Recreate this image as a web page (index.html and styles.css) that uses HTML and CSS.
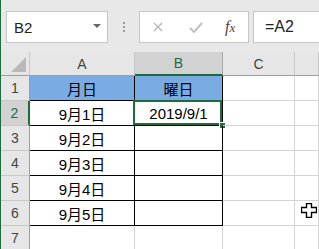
FILE: index.html
```html
<!DOCTYPE html>
<html lang="ja">
<head>
    <meta charset="UTF-8">
    <title>Book1 - Excel</title>
    <link rel="stylesheet" href="styles.css">
</head>
<body>
    <div class="window">
        <!-- formula bar -->
        <div class="formula-bar">
            <div class="name-box">
                <span>B2</span>
                <span class="caret"></span>
            </div>
            <div class="grip"><i></i><i></i><i></i></div>
            <div class="fx-buttons">
                <svg class="btn-cancel" width="10" height="10" viewBox="0 0 10 10">
                    <path d="M1 1 L9 9 M9 1 L1 9" stroke="#b4b4b4" stroke-width="1.3" fill="none"/>
                </svg>
                <svg class="btn-enter" width="14" height="11" viewBox="0 0 14 11">
                    <path d="M1 6 L5 10 L13 1" stroke="#c0c0c0" stroke-width="2" fill="none"/>
                </svg>
                <span class="fx">f<small>x</small></span>
            </div>
            <div class="formula-input">=A2</div>
        </div>

        <!-- sheet -->
        <div class="sheet">
            <div class="hd corner"><span class="tri"></span></div>
            <div class="hd col">A</div>
            <div class="hd col active-col">B</div>
            <div class="hd col">C</div>
            <div class="hd col"></div>

            <div class="hd row">1</div>
            <div class="cell boxed title">月日</div>
            <div class="cell boxed title">曜日</div>
            <div class="cell"></div>
            <div class="cell"></div>

            <div class="hd row active-row">2</div>
            <div class="cell boxed">9月1日</div>
            <div class="cell boxed selected">2019/9/1</div>
            <div class="cell"></div>
            <div class="cell"></div>

            <div class="hd row">3</div>
            <div class="cell boxed">9月2日</div>
            <div class="cell boxed"></div>
            <div class="cell"></div>
            <div class="cell"></div>

            <div class="hd row">4</div>
            <div class="cell boxed">9月3日</div>
            <div class="cell boxed"></div>
            <div class="cell"></div>
            <div class="cell"></div>

            <div class="hd row">5</div>
            <div class="cell boxed">9月4日</div>
            <div class="cell boxed"></div>
            <div class="cell"></div>
            <div class="cell"></div>

            <div class="hd row">6</div>
            <div class="cell boxed">9月5日</div>
            <div class="cell boxed"></div>
            <div class="cell"></div>
            <div class="cell"></div>

            <div class="hd row">7</div>
            <div class="cell"></div>
            <div class="cell"></div>
            <div class="cell"></div>
            <div class="cell"></div>
        </div>

        <!-- mouse pointer -->
        <svg class="pointer" width="16" height="15" viewBox="0 0 16 15">
            <path d="M5.5 0.5 H10.5 V4.5 H15.5 V9.5 H10.5 V14.5 H5.5 V9.5 H0.5 V4.5 H5.5 Z" fill="#fff" stroke="#000" stroke-width="1.4"/>
        </svg>
    </div>
</body>
</html>
```

FILE: styles.css
```css
* {
    box-sizing: border-box;
}
body {
    margin: 0;
    background-color: #ffffff;
    font-family: "Liberation Sans", "Noto Sans CJK JP", sans-serif;
    overflow: hidden;
}
.window {
    position: relative;
    width: 319px;
    height: 249px;
    border-left: 1px solid #1d6b3e;
    overflow: hidden;
}

/* formula bar */
.formula-bar {
    height: 52px;
    background-color: #e8e8e8;
    display: flex;
    align-items: flex-start;
    padding: 11px 0 0 5px;
}
.name-box {
    width: 102px;
    height: 32px;
    background-color: #fff;
    border: 1px solid #c6c6c6;
    display: flex;
    align-items: center;
    justify-content: space-between;
    padding: 0 6px 0 7px;
    font-size: 15px;
    color: #222;
}
.caret {
    width: 0;
    height: 0;
    border-left: 4px solid transparent;
    border-right: 4px solid transparent;
    border-top: 4px solid #666;
    margin-bottom: 2px;
}
.grip {
    width: 31px;
    height: 32px;
    display: flex;
    flex-direction: column;
    align-items: center;
    justify-content: center;
    gap: 2px;
}
.grip i {
    width: 2px;
    height: 2px;
    background-color: #9a9a9a;
}
.fx-buttons {
    width: 110px;
    height: 32px;
    background-color: #fff;
    border: 1px solid #c6c6c6;
    display: flex;
    align-items: center;
    padding-left: 13px;
}
.btn-cancel {
    margin-right: 26px;
}
.btn-enter {
    margin-right: 22px;
}
.fx {
    font-family: "Liberation Serif", serif;
    font-style: italic;
    font-size: 16px;
    color: #444;
}
.fx small {
    font-size: 13px;
}
.formula-input {
    flex: 1;
    height: 32px;
    margin-left: 4px;
    background-color: #fff;
    border: 1px solid #c6c6c6;
    border-right: none;
    padding-left: 11px;
    font-size: 16px;
    line-height: 30px;
    color: #222;
}

/* sheet grid */
.sheet {
    display: grid;
    grid-template-columns: 29px 105px 88px 72px 1fr;
    grid-template-rows: 24px repeat(7, 25px);
}
.hd {
    background-color: #e6e6e6;
    color: #444;
    font-size: 14px;
    display: flex;
    align-items: center;
    justify-content: center;
}
.corner {
    border-right: 1px solid #c8c8c8;
    border-bottom: 1px solid #9e9e9e;
    align-items: flex-end;
    justify-content: flex-end;
    padding: 0 3px 3px 0;
}
.tri {
    width: 0;
    height: 0;
    border-left: 15px solid transparent;
    border-bottom: 15px solid #b8b8b8;
}
.col {
    border-right: 1px solid #c8c8c8;
    border-bottom: 1px solid #9e9e9e;
}
.row {
    border-right: 1px solid #9e9e9e;
    border-bottom: 1px solid #c8c8c8;
}
.active-col {
    background-color: #d2d2d2;
    color: #1d6b3e;
    border-bottom: 2px solid #1d6b3e;
    border-right-color: #a8a8a8;
}
.active-row {
    background-color: #d2d2d2;
    color: #1d6b3e;
    border-right: 2px solid #1d6b3e;
}
.cell {
    position: relative;
    border-right: 1px solid #d4d4d4;
    border-bottom: 1px solid #d4d4d4;
    font-size: 15px;
    color: #000;
    display: flex;
    align-items: center;
    justify-content: center;
}
.boxed {
    border-right-color: #000;
    border-bottom-color: #000;
}
.title {
    background-color: #7aabe3;
}
.selected::before {
    content: "";
    position: absolute;
    left: -2px;
    top: -1px;
    right: 0;
    bottom: 0;
    border: 2px solid #1d6b3e;
}
.selected::after {
    content: "";
    position: absolute;
    right: -3px;
    bottom: -3px;
    width: 5px;
    height: 5px;
    background-color: #1d6b3e;
    outline: 1px solid #fff;
}
.pointer {
    position: absolute;
    left: 300px;
    top: 203px;
}
```
